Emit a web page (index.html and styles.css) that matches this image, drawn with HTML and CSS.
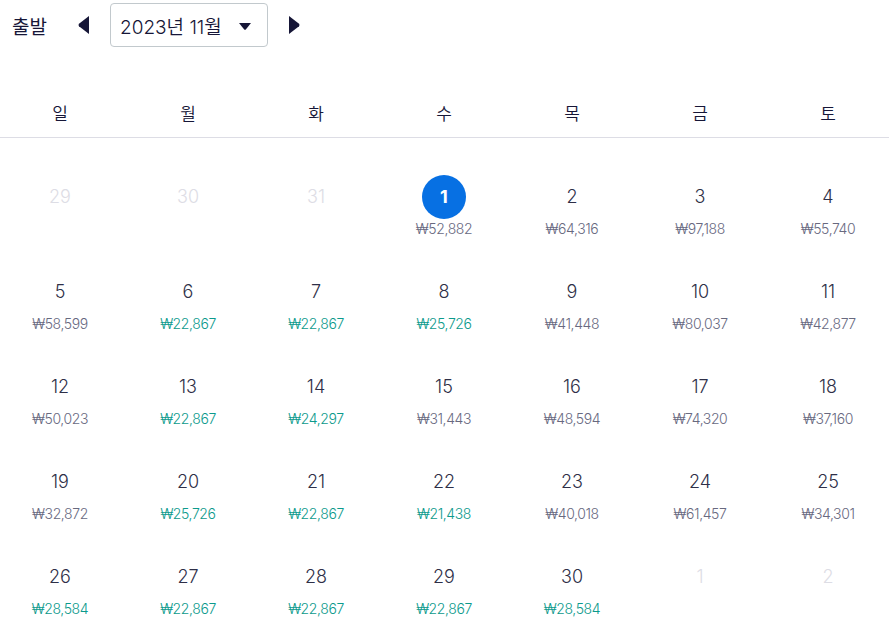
FILE: index.html
```html
<!DOCTYPE html>
<html lang="ko">
<head>
<meta charset="utf-8">
<link rel="stylesheet" href="styles.css">
</head>
<body>
<div class="header">
  <span class="label">출발</span>
  <button class="arrow arrow-prev" aria-label="이전">
    <svg width="12" height="18" viewBox="0 0 12 18"><path d="M11 0 L11 18 L1 10.2 Q0 9 1 7.8 Z" fill="#161637"/></svg>
  </button>
  <div class="select">
    <span>2023년 11월</span>
    <svg width="12" height="7" viewBox="0 0 12 7"><path d="M0 0 L12 0 L6.8 6.4 Q6 7.2 5.2 6.4 Z" fill="#161637"/></svg>
  </div>
  <button class="arrow arrow-next" aria-label="다음">
    <svg width="12" height="18" viewBox="0 0 12 18"><path d="M1 0 L1 18 L11 10.2 Q12 9 11 7.8 Z" fill="#161637"/></svg>
  </button>
</div>

<div class="weekdays">
  <div>일</div><div>월</div><div>화</div><div>수</div><div>목</div><div>금</div><div>토</div>
</div>

<div class="days">
  <div class="day out"><span class="num">29</span></div>
  <div class="day out"><span class="num">30</span></div>
  <div class="day out"><span class="num">31</span></div>
  <div class="day selected"><span class="num">1</span><span class="price">₩52,882</span></div>
  <div class="day"><span class="num">2</span><span class="price">₩64,316</span></div>
  <div class="day"><span class="num">3</span><span class="price">₩97,188</span></div>
  <div class="day"><span class="num">4</span><span class="price">₩55,740</span></div>

  <div class="day"><span class="num">5</span><span class="price">₩58,599</span></div>
  <div class="day"><span class="num">6</span><span class="price low">₩22,867</span></div>
  <div class="day"><span class="num">7</span><span class="price low">₩22,867</span></div>
  <div class="day"><span class="num">8</span><span class="price low">₩25,726</span></div>
  <div class="day"><span class="num">9</span><span class="price">₩41,448</span></div>
  <div class="day"><span class="num">10</span><span class="price">₩80,037</span></div>
  <div class="day"><span class="num">11</span><span class="price">₩42,877</span></div>

  <div class="day"><span class="num">12</span><span class="price">₩50,023</span></div>
  <div class="day"><span class="num">13</span><span class="price low">₩22,867</span></div>
  <div class="day"><span class="num">14</span><span class="price low">₩24,297</span></div>
  <div class="day"><span class="num">15</span><span class="price">₩31,443</span></div>
  <div class="day"><span class="num">16</span><span class="price">₩48,594</span></div>
  <div class="day"><span class="num">17</span><span class="price">₩74,320</span></div>
  <div class="day"><span class="num">18</span><span class="price">₩37,160</span></div>

  <div class="day"><span class="num">19</span><span class="price">₩32,872</span></div>
  <div class="day"><span class="num">20</span><span class="price low">₩25,726</span></div>
  <div class="day"><span class="num">21</span><span class="price low">₩22,867</span></div>
  <div class="day"><span class="num">22</span><span class="price low">₩21,438</span></div>
  <div class="day"><span class="num">23</span><span class="price">₩40,018</span></div>
  <div class="day"><span class="num">24</span><span class="price">₩61,457</span></div>
  <div class="day"><span class="num">25</span><span class="price">₩34,301</span></div>

  <div class="day"><span class="num">26</span><span class="price low">₩28,584</span></div>
  <div class="day"><span class="num">27</span><span class="price low">₩22,867</span></div>
  <div class="day"><span class="num">28</span><span class="price low">₩22,867</span></div>
  <div class="day"><span class="num">29</span><span class="price low">₩22,867</span></div>
  <div class="day"><span class="num">30</span><span class="price low">₩28,584</span></div>
  <div class="day out"><span class="num">1</span></div>
  <div class="day out"><span class="num">2</span></div>
</div>
</body>
</html>
```

FILE: styles.css
```css
html, body {
  margin: 0;
  padding: 0;
  background: #ffffff;
  overflow: hidden;
}
body {
  font-family: "Inter", "Noto Sans CJK KR", sans-serif;
  color: #161637;
  width: 889px;
}
.header {
  display: flex;
  align-items: center;
  padding: 3px 0 0 12px;
  height: 44px;
}
.label {
  font-size: 19px;
  margin-right: 29px;
  width: 37px;
}
.arrow {
  border: 0;
  background: none;
  padding: 0;
  width: 12px;
  height: 18px;
  display: flex;
  cursor: pointer;
}
.arrow-prev { margin-right: 20px; }
.arrow-next { margin-left: 20px; }
.select {
  box-sizing: border-box;
  width: 158px;
  height: 44px;
  border: 1px solid #c2c9cd;
  border-radius: 4px;
  display: flex;
  align-items: center;
  justify-content: space-between;
  padding: 0 16px 0 9px;
  font-size: 19px;
  font-weight: 350;
}
.select svg { margin-top: 2px; }
.weekdays {
  display: grid;
  grid-template-columns: repeat(7, 128px);
  margin: 44px 0 0 -4px;
  width: 896px;
  height: 46px;
  align-items: center;
  text-align: center;
  font-size: 17px;
  font-weight: 350;
  border-bottom: 1px solid #dddde5;
  line-height: 46px;
}
.days {
  display: grid;
  grid-template-columns: repeat(7, 128px);
  grid-auto-rows: 95px;
  margin-left: -4px;
  width: 896px;
  padding-top: 37px;
}
.day {
  display: flex;
  flex-direction: column;
  align-items: center;
}
.num {
  width: 44px;
  height: 44px;
  line-height: 44px;
  text-align: center;
  font-size: 18px;
  font-weight: 350;
  color: #2e2f47;
  border-radius: 50%;
}
.price {
  font-size: 14px;
  line-height: 20px;
  font-weight: 350;
  color: #68697f;
  letter-spacing: -0.4px;
}
.price.low { color: #0c9a8c; }
.out .num { color: #dddde5; }
.selected .num {
  background: #0770e3;
  color: #ffffff;
  font-weight: 700;
}
```
